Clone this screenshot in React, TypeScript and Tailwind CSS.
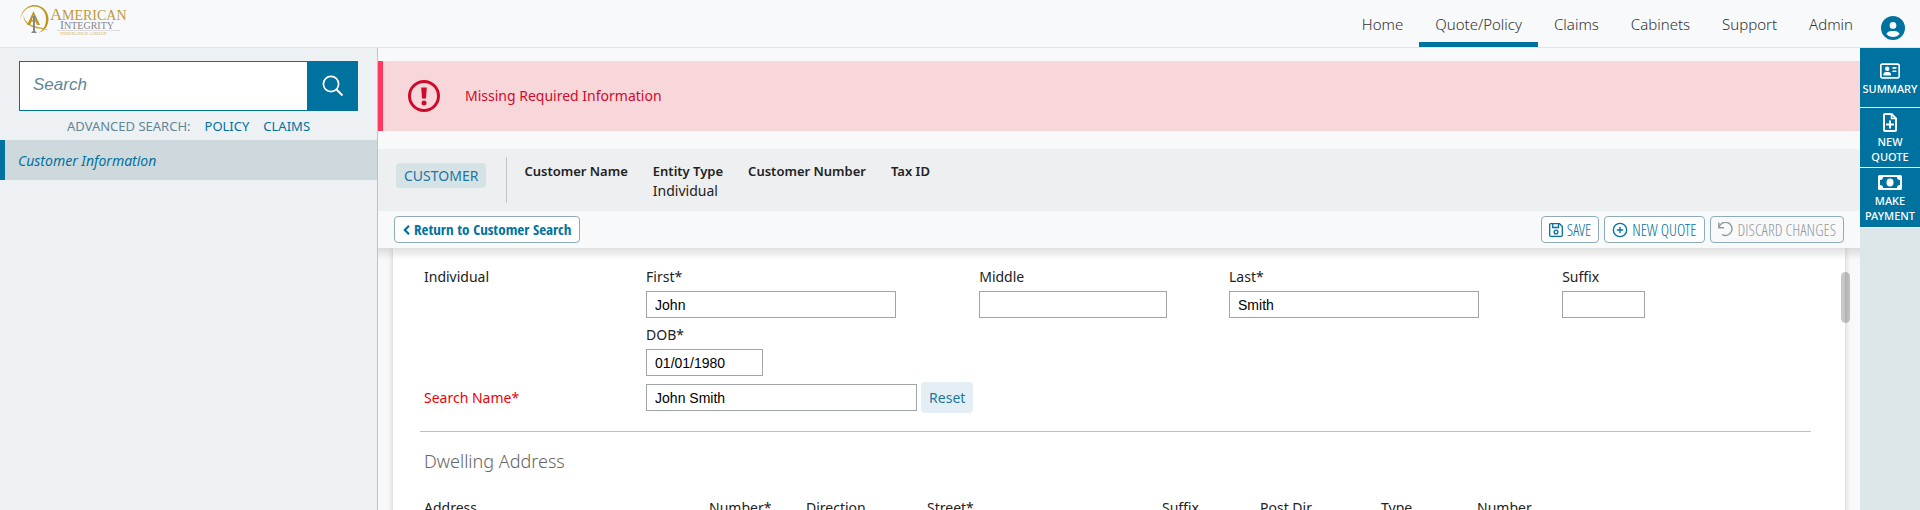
import React from "react";
import { CirclePlus } from "lucide-react";
import { FaCircleUser, FaRegAddressCard } from "react-icons/fa6";

function Logo() {
  return (
    <svg width="108" height="32" viewBox="0 0 108 32" role="img" aria-label="American Integrity Insurance Group">
      <path d="M0 16C1 6 9 .5 15 1c8 .5 13.500 7 13.500 14 0 7-4 12-10 14 5-3 7.500-8 7.500-14C26 7 20.500 2.200 14 2.400 7.500 2.700 2 7 0 16z" fill="#c1961c" />
      <path d="M4 10c-1 6 4 11 14 13 4 .8 8 1.500 11 4-4-2-7-2-11-2.500C8 23 2 17 4 10z" fill="#c9a33a" />
      <path d="M13.500 7l6.500 14h-3l-1.500-3.500h-4L10 21H7z M13.500 11L12 16h3z" fill="#c1961c" fillRule="evenodd" />
      <path d="M12.500 12h3v1l-.5 1v13l1.500 1v1h-5v-1l1.500-1V14l-.5-1z" fill="#85858c" />
      <g fontFamily="'Liberation Serif', serif">
        <text x="30" y="16" fontSize="17" fill="#c1983a">A</text>
        <text x="42" y="16" fontSize="14" fill="#c1983a">MERICAN</text>
        <text x="40" y="25" fontSize="12" fill="#85858c">I</text>
        <text x="44" y="25" fontSize="10" fill="#85858c">NTEGRITY</text>
        <text x="40" y="31" fontSize="5" fill="#d0b56c">INSURANCE GROUP</text>
      </g>
      <path d="M37 26.500h63" stroke="#dcdcde" />
    </svg>
  );
}

function SearchIcon() {
  return (
    <svg width="22" height="22" viewBox="0 0 22 22" fill="none" stroke="currentColor" strokeWidth="1.700" aria-hidden="true">
      <circle cx="9" cy="9" r="7.600" />
      <path d="M14.500 14.500l6 6" strokeWidth="2" />
    </svg>
  );
}

function FilePlusIcon() {
  return (
    <svg width="14" height="19" viewBox="0 0 14 19" fill="none" stroke="currentColor" strokeWidth="2" aria-hidden="true">
      <path d="M2 1h6.500L13 5.500V17a1 1 0 0 1-1 1H2a1 1 0 0 1-1-1V2a1 1 0 0 1 1-1z" />
      <path d="M8.500 1v4.500H13" strokeWidth="1.500" />
      <path d="M7 7.500v8M3 11.500h8" />
    </svg>
  );
}

function BillIcon() {
  return (
    <svg width="24" height="15" viewBox="0 0 24 15" fill="currentColor" aria-hidden="true">
      <path fillRule="evenodd" d="M1.500 0h21A1.500 1.500 0 0 1 24 1.500v12a1.500 1.500 0 0 1-1.500 1.500h-21A1.500 1.500 0 0 1 0 13.500v-12A1.500 1.500 0 0 1 1.500 0zM5 2a3 3 0 0 1-3 3v5a3 3 0 0 1 3 3h14a3 3 0 0 1 3-3V5a3 3 0 0 1-3-3z" />
      <ellipse cx="12" cy="7.500" rx="3.500" ry="4" />
    </svg>
  );
}

function AlertIcon() {
  return (
    <svg width="34" height="34" viewBox="0 0 34 34" aria-hidden="true">
      <circle cx="17" cy="17" r="14.500" fill="none" stroke="#cf0a2c" strokeWidth="3" />
      <path d="M14.200 8.500h5.600l-.8 11h-4z" fill="#cf0a2c" />
      <circle cx="17" cy="24" r="2.500" fill="#cf0a2c" />
    </svg>
  );
}

function BackIcon() {
  return (
    <svg width="7" height="10" viewBox="0 0 7 10" fill="none" stroke="currentColor" strokeWidth="2.200" aria-hidden="true">
      <path d="M6 .8L1.800 5 6 9.200" />
    </svg>
  );
}

function SaveIcon() {
  return (
    <svg width="14" height="14" viewBox="0 0 14 14" fill="none" stroke="currentColor" strokeWidth="1.300" aria-hidden="true">
      <path d="M1.700.7h8.800l2.800 2.800v8.800a1 1 0 0 1-1 1H1.700a1 1 0 0 1-1-1V1.700a1 1 0 0 1 1-1z" />
      <path d="M3.700.7v3.800h5.800V.7" />
      <circle cx="7" cy="9" r="1.900" />
    </svg>
  );
}

function UndoIcon() {
  return (
    <svg width="16" height="15" viewBox="0 0 16 15" fill="none" stroke="currentColor" strokeWidth="1.400" aria-hidden="true">
      <path d="M.8.500v5.200H6" />
      <path d="M1 5.300A6.600 6.600 0 1 1 4.200 12.600" />
    </svg>
  );
}

const nav = ["Home", "Quote/Policy", "Claims", "Cabinets", "Support", "Admin"];

const details = [
  { label: "Customer Name", value: "" },
  { label: "Entity Type", value: "Individual" },
  { label: "Customer Number", value: "" },
  { label: "Tax ID", value: "" },
];

const inputClass =
  "block h-[27px] border border-[#9fa5a8] bg-white px-2 font-['Liberation_Sans',sans-serif] text-sm text-black";

function Field({ id, label, value, width }: { id: string; label: string; value: string; width: string }) {
  return (
    <div>
      <label htmlFor={id} className="block h-[26px] leading-6">
        {label}
      </label>
      <input id={id} defaultValue={value} className={`${inputClass} ${width}`} />
    </div>
  );
}

const actionClass = "flex h-[27px] items-center gap-1 rounded border border-[#8fabb8]";
const lightCondensed = "px-[7px] font-['Open_Sans_Condensed_Light','Open_Sans',sans-serif] text-base";

const railClass =
  "flex h-[60px] w-full flex-col items-center justify-center border-b border-white bg-[#0072a0] pt-[2px] text-[11px] leading-[15px] font-medium text-white";

export default function App() {
  return (
    <div className="flex h-screen flex-col overflow-hidden bg-[#f7f9fb] font-['Noto_Sans',sans-serif] text-sm text-[#222]">
      <header className="flex h-12 shrink-0 items-start justify-between border-b border-[#dce6e9] pl-5">
        <a href="#home" className="mt-1">
          <Logo />
        </a>
        <div className="flex">
          <nav className="flex text-[15px] font-light text-[#333]">
            {nav.map((item) => (
              <a
                key={item}
                href={`#${item}`}
                className={`h-[47px] px-4 pt-3 leading-6 ${item === "Quote/Policy" ? "border-b-5 border-[#0072a0]" : ""}`}
              >
                {item}
              </a>
            ))}
          </nav>
          <button aria-label="Account" className="mr-[15px] ml-3 pt-2 text-[#0072a0]">
            <FaCircleUser size={24} />
          </button>
        </div>
      </header>

      <div className="flex min-h-0 flex-1">
        <aside className="w-[378px] shrink-0 border-r border-[#b4c7cd] bg-[#edf1f4]">
          <form className="mt-[13px] mr-[19px] ml-[19px] flex h-[50px]">
            <input
              aria-label="Search"
              placeholder="Search"
              className="min-w-0 flex-1 border border-[#0072a0] bg-white px-[13px] pb-[2px] font-['Liberation_Sans',sans-serif] text-[17px] italic placeholder:text-[#5f8797]"
            />
            <button type="button" aria-label="Run search" className="flex w-[50px] items-center justify-center bg-[#0072a0] text-white">
              <SearchIcon />
            </button>
          </form>
          <div className="flex h-[29px] items-center justify-center gap-[14px] pt-px text-[13px] text-[#5f8797]">
            <span>ADVANCED SEARCH:</span>
            <a href="#policy" className="text-[#0072a0]">POLICY</a>
            <a href="#claims" className="text-[#0072a0]">CLAIMS</a>
          </div>
          <a href="#customer" className="flex h-10 items-center border-l-5 border-[#0072a0] bg-[#ced9dd] pt-[2px] pl-[13px] text-[#0072a0] italic">
            Customer Information
          </a>
        </aside>

        <main className="flex min-w-0 flex-1 flex-col">
          <div role="alert" className="mt-[13px] flex h-[70px] shrink-0 items-center gap-6 border-l-5 border-[#ff3860] bg-[#f7d7da] pl-6 text-[#cf0a2c]">
            <AlertIcon />
            Missing Required Information
          </div>

          <section className="mt-[18px] flex h-[62px] shrink-0 items-start bg-[#eeeff1] pt-2 pl-[18px]">
            <span className="mt-[6px] rounded bg-[#d5e3e7] px-2 leading-[25px] text-[#2076a0]">CUSTOMER</span>
            <dl className="ml-5 flex h-[46px] gap-[25px] border-l border-[#c2c7c9] pt-1 pl-[17px] leading-5">
              {details.map((d) => (
                <div key={d.label}>
                  <dt className="text-[13px] leading-5 font-semibold">{d.label}</dt>
                  <dd>{d.value}</dd>
                </div>
              ))}
            </dl>
          </section>

          <div className="flex h-[37px] shrink-0 items-center justify-between pr-4 pl-4">
            <button className={`${actionClass} bg-white px-2 font-['Open_Sans_Condensed','Open_Sans',sans-serif] text-[15px] text-[#0072a0]`}>
              <BackIcon />
              Return to Customer Search
            </button>
            <div className="flex gap-[5px]">
              <button className={`${actionClass} ${lightCondensed} bg-white text-[#0072a0]`}>
                <SaveIcon />
                SAVE
              </button>
              <button className={`${actionClass} ${lightCondensed} bg-white text-[#0072a0]`}>
                <CirclePlus size={16} strokeWidth={2} />
                NEW QUOTE
              </button>
              <button disabled className={`${actionClass} ${lightCondensed} text-[#95999b]`}>
                <UndoIcon />
                DISCARD CHANGES
              </button>
            </div>
          </div>

          <div className="relative min-h-0 flex-1 overflow-hidden px-[15px]">
            <div className="min-h-full bg-white px-[27px] shadow-[0_0_6px_#00000033]">
              <div className="grid grid-cols-[16fr_24fr_18fr_24fr_18fr] pt-[17px] pr-[6px] pl-1">
                <div className="leading-6">Individual</div>
                <Field id="first" label="First*" value="John" width="w-3/4" />
                <Field id="middle" label="Middle" value="" width="w-3/4" />
                <Field id="last" label="Last*" value="Smith" width="w-3/4" />
                <Field id="suffix" label="Suffix" value="" width="w-1/3" />
                <div className="col-start-2 mt-[5px]">
                  <Field id="dob" label="DOB*" value="01/01/1980" width="w-[117px]" />
                </div>
                <label htmlFor="search-name" className="col-start-1 mt-[6px] leading-[31px] text-[#f00000]">
                  Search Name*
                </label>
                <div className="col-span-4 mt-[6px] flex items-center gap-1">
                  <input id="search-name" defaultValue="John Smith" className={`${inputClass} w-[271px]`} />
                  <button className="h-[31px] rounded-sm bg-[#e4eff5] px-2 text-[#2076a0]">Reset</button>
                </div>
              </div>
              <hr className="mt-[18px] mr-[7px] border-[#c0c0c0]" />
              <h2 className="mt-[17px] pl-1 text-lg leading-6 font-light text-[#666]">Dwelling Address</h2>
              <div className="mt-[23px] grid grid-cols-[285fr_97fr_121fr_235fr_98fr_121fr_96fr_335fr] pr-[6px] pl-1 leading-6">
                <span>Address</span>
                <span>Number*</span>
                <span>Direction</span>
                <span>Street*</span>
                <span>Suffix</span>
                <span>Post Dir</span>
                <span>Type</span>
                <span>Number</span>
              </div>
            </div>
            <div className="absolute inset-x-0 top-0 h-3 bg-linear-to-b from-black/12 to-transparent" />
            <div className="absolute top-6 right-[10px] h-[51px] w-[9px] rounded-full bg-black/22" />
          </div>
        </main>

        <aside className="w-[60px] shrink-0 bg-[#dde6e8]">
          <button className={railClass}>
            <FaRegAddressCard size={20} />
            SUMMARY
          </button>
          <button className={railClass}>
            <FilePlusIcon />
            <span className="mt-[2px]">NEW QUOTE</span>
          </button>
          <button className={railClass}>
            <BillIcon />
            <span className="mt-[3px]">MAKE PAYMENT</span>
          </button>
        </aside>
      </div>
    </div>
  );
}
